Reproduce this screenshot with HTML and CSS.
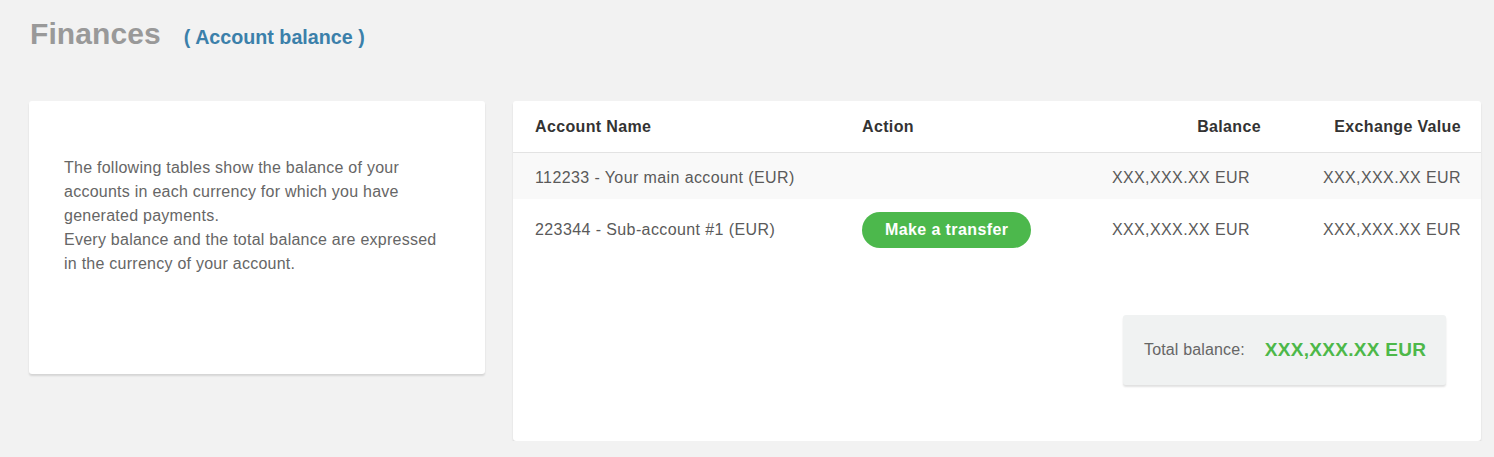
FILE: index.html
```html
<!DOCTYPE html>
<html lang="en">
<head>
    <meta charset="UTF-8">
    <meta name="viewport" content="width=device-width, initial-scale=1.0">
    <title>Finances - Account balance</title>
    <link rel="stylesheet" href="styles.css">
</head>
<body>
    <div class="page-header">
        <h1>Finances</h1>
        <h2>( Account balance )</h2>
    </div>

    <div class="layout">
        <div class="card info-card">
            <p>The following tables show the balance of your accounts in each currency for which you have generated payments.<br>
            Every balance and the total balance are expressed in the currency of your account.</p>
        </div>

        <div class="card balance-card">
            <div class="row head">
                <div>Account Name</div>
                <div>Action</div>
                <div class="num">Balance</div>
                <div class="num">Exchange Value</div>
            </div>
            <div class="row striped">
                <div>112233 - Your main account (EUR)</div>
                <div></div>
                <div class="num bal">XXX,XXX.XX EUR</div>
                <div class="num">XXX,XXX.XX EUR</div>
            </div>
            <div class="row tall">
                <div>223344 - Sub-account #1 (EUR)</div>
                <div><button class="btn-transfer">Make a transfer</button></div>
                <div class="num bal">XXX,XXX.XX EUR</div>
                <div class="num">XXX,XXX.XX EUR</div>
            </div>

            <div class="total-wrap">
                <div class="total-box">
                    <span class="total-label">Total balance:</span>
                    <span class="total-value">XXX,XXX.XX EUR</span>
                </div>
            </div>
        </div>
    </div>
</body>
</html>
```

FILE: styles.css
```css
body {
    margin: 0;
    font-family: "Liberation Sans", Arial, sans-serif;
    background-color: #f2f2f2;
    color: #666;
}
.page-header {
    display: flex;
    align-items: baseline;
    gap: 23px;
    padding: 17px 30px 0 30px;
    height: 86px;
    box-sizing: border-box;
}
.page-header h1 {
    margin: 0;
    font-size: 30px;
    font-weight: bold;
    color: #999;
    letter-spacing: 0.1px;
}
.page-header h2 {
    margin: 0;
    font-size: 19.7px;
    font-weight: bold;
    color: #3b80aa;
}
.layout {
    display: grid;
    grid-template-columns: 456px 968px;
    gap: 28px;
    align-items: start;
    padding: 15px 0 0 29px;
}
.card {
    background: white;
    border-radius: 3px;
    box-shadow: 0 2px 2px rgba(0, 0, 0, 0.12);
}
.info-card {
    height: 273px;
    box-sizing: border-box;
    padding: 55px 38px 0 35px;
}
.info-card p {
    margin: 0;
    font-size: 16px;
    line-height: 24px;
    letter-spacing: 0.25px;
    color: #666;
}
.balance-card {
    height: 340px;
    box-sizing: border-box;
}
.row {
    display: grid;
    grid-template-columns: 327px 200px 199px 200px;
    align-items: center;
    box-sizing: border-box;
    padding: 0 20px 0 22px;
    font-size: 16px;
    letter-spacing: 0.4px;
    color: #5a5a5a;
}
.row .num {
    text-align: right;
}
.row .bal {
    padding-right: 11px;
}
.head {
    height: 52px;
    font-weight: bold;
    letter-spacing: 0.35px;
    color: #333;
    border-bottom: 1px solid #e3e3e3;
}
.striped {
    height: 46px;
    padding-top: 3px;
    background: #f9f9f9;
}
.tall {
    height: 60px;
    padding-top: 1px;
}
.btn-transfer {
    height: 36px;
    padding: 0 23px;
    font-family: "Liberation Sans", Arial, sans-serif;
    font-size: 16px;
    font-weight: bold;
    letter-spacing: 0.4px;
    color: white;
    background-color: #4cb84c;
    border: none;
    border-radius: 18px;
    cursor: pointer;
}
.total-wrap {
    display: flex;
    justify-content: flex-end;
    padding: 56px 35px 0 0;
}
.total-box {
    width: 323px;
    height: 70px;
    box-sizing: border-box;
    display: flex;
    align-items: center;
    gap: 20px;
    padding-left: 21px;
    background: #f0f2f2;
    border-radius: 3px;
    box-shadow: 0 2px 2px rgba(0, 0, 0, 0.12);
}
.total-label {
    font-size: 16px;
    letter-spacing: 0.15px;
    color: #666;
}
.total-value {
    font-size: 19px;
    font-weight: bold;
    letter-spacing: 0.3px;
    color: #4db849;
}
```
